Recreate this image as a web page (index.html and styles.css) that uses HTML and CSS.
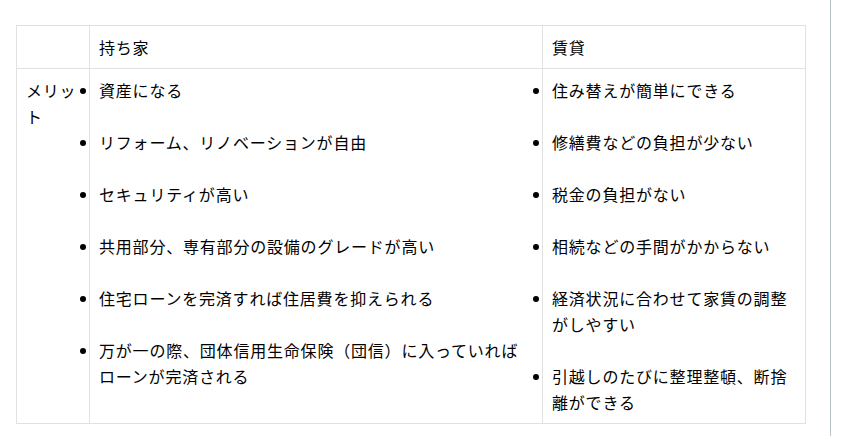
FILE: index.html
```html
<!DOCTYPE html>
<html lang="ja">
<head>
<meta charset="utf-8">
<link rel="stylesheet" href="styles.css">
</head>
<body>
<div class="page">
  <main class="content">
    <table class="compare">
      <colgroup>
        <col class="c1"><col class="c2"><col class="c3">
      </colgroup>
      <thead>
        <tr><th></th><th>持ち家</th><th>賃貸</th></tr>
      </thead>
      <tbody>
        <tr>
          <td>メリット</td>
          <td>
            <ul>
              <li>資産になる</li>
              <li>リフォーム、リノベーションが自由</li>
              <li>セキュリティが高い</li>
              <li>共用部分、専有部分の設備のグレードが高い</li>
              <li>住宅ローンを完済すれば住居費を抑えられる</li>
              <li>万が一の際、団体信用生命保険（団信）に入っていればローンが完済される</li>
            </ul>
          </td>
          <td>
            <ul>
              <li>住み替えが簡単にできる</li>
              <li>修繕費などの負担が少ない</li>
              <li>税金の負担がない</li>
              <li>相続などの手間がかからない</li>
              <li>経済状況に合わせて家賃の調整がしやすい</li>
              <li>引越しのたびに整理整頓、断捨離ができる</li>
            </ul>
          </td>
        </tr>
      </tbody>
    </table>
  </main>
  <aside class="side"></aside>
</div>
</body>
</html>
```

FILE: styles.css
```css
html, body {
  margin: 0;
  padding: 0;
  background: #fff;
}
body {
  font-family: "Noto Sans CJK JP", "Noto Sans", sans-serif;
  font-size: 16px;
  color: #000;
}
.page {
  display: flex;
  height: 436px;
}
.content {
  width: 830px;
  padding: 25px 0 0 16px;
  box-sizing: border-box;
}
.side {
  flex: 1;
  border-left: 1px solid #b9c4c8;
}
.compare {
  border-collapse: collapse;
  table-layout: fixed;
  width: 789px;
  line-height: 26px;
  letter-spacing: 0.8px;
}
.c1 { width: 73px; }
.c2 { width: 453px; }
.c3 { width: 263px; }
.compare th,
.compare td {
  border: 1px solid #e1e1e1;
  padding: 8px 9px;
  text-align: left;
  vertical-align: top;
  font-weight: normal;
}
.compare ul {
  margin: 0;
  padding: 0;
  list-style: disc outside;
}
.compare li {
  margin: 0 0 26px 0;
}
.compare li:last-child {
  margin-bottom: 0;
}
```
